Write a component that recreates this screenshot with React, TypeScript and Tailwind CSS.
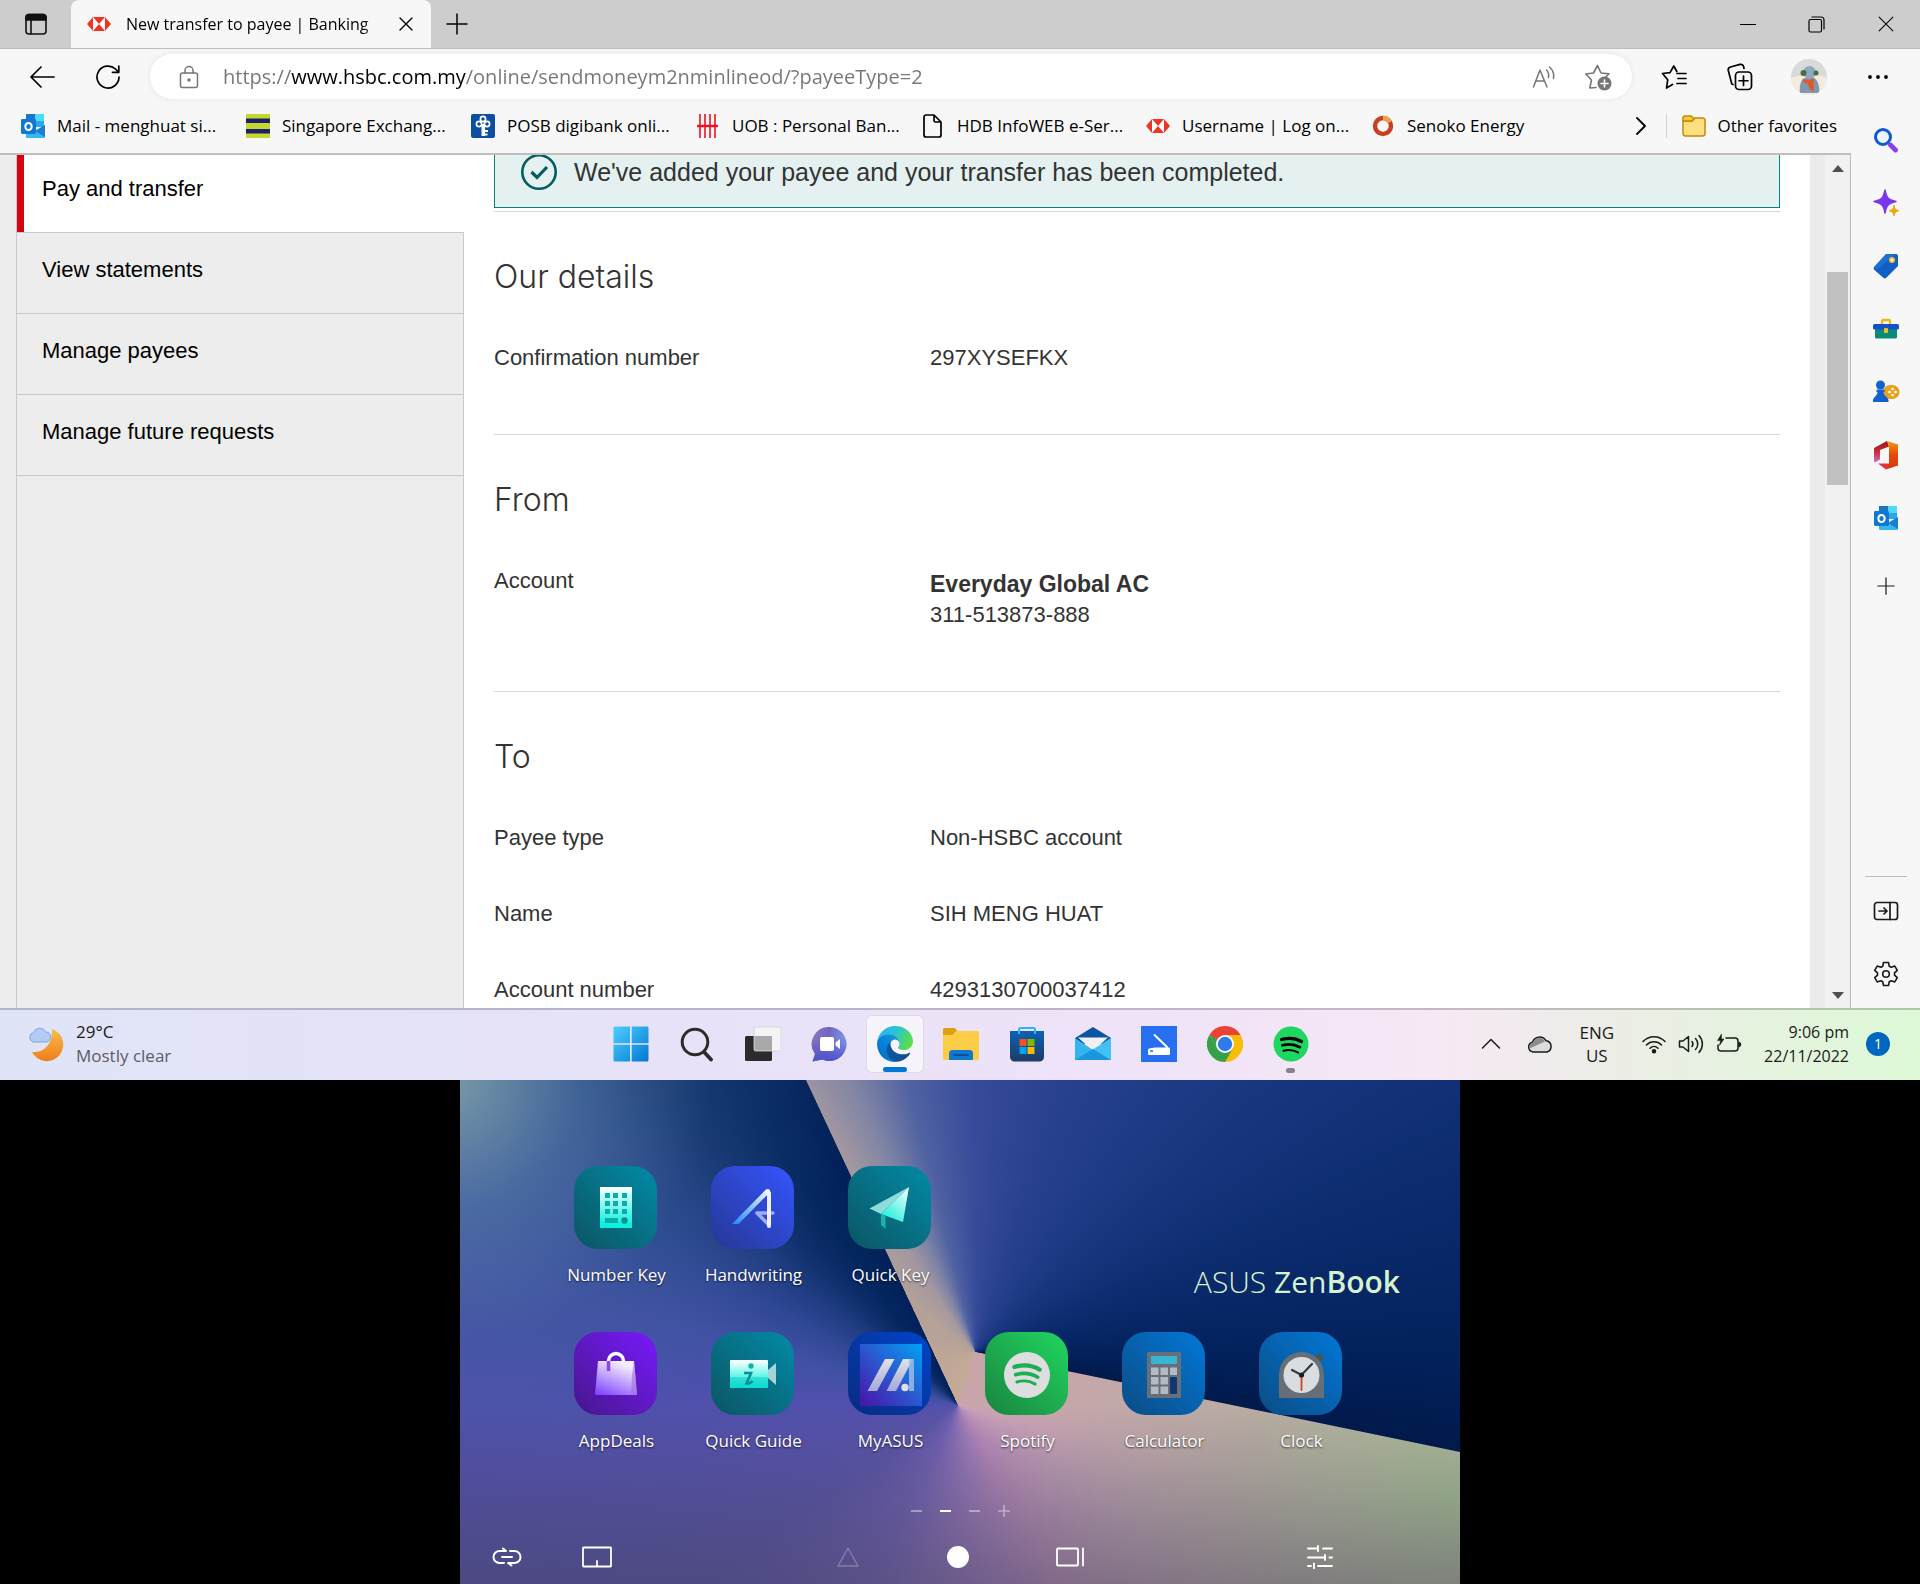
import type { ReactNode } from "react";

type IconProps = { className?: string };

/* ---------- Shared logos ---------- */

function HsbcLogo({ className = "w-6 h-4" }: IconProps) {
  return (
    <svg viewBox="0 0 24 16" className={className} aria-hidden="true">
      <rect x="5" y="1" width="14" height="14" fill="#fff" />
      <path d="M0 8 6 1v14zM24 8l-6-7v14z" fill="#ee3524" />
      <path d="M6 1h12l-6 7zM6 15h12l-6-7z" fill="#ee3524" />
    </svg>
  );
}

function OutlookLogo({ className = "w-6 h-6" }: IconProps) {
  return (
    <svg viewBox="0 0 24 24" className={className} aria-hidden="true">
      <path d="M5 0h17a1 1 0 0 1 1 1v12H5z" fill="#28a8ea" />
      <path d="M5 0h9v7H5z" fill="#1877c0" />
      <path d="M14 0h8a1 1 0 0 1 1 1v6h-9z" fill="#50d9ff" />
      <path d="M14 7h9v6h-9z" fill="#28a8ea" />
      <path d="M5 13l9 4 10-6v12a1 1 0 0 1-1 1H6a1 1 0 0 1-1-1z" fill="#35b8f1" />
      <path d="M14 17l10-6v12z" fill="#1a7fcf" />
      <rect x="0" y="5" width="15" height="15" rx="1.400" fill="#0f78d4" />
      <ellipse cx="7.500" cy="12.500" rx="3.200" ry="3.500" fill="none" stroke="#fff" strokeWidth="2" />
    </svg>
  );
}

function SpotifyWaves({ color }: { color: string }) {
  return (
    <g fill="none" stroke={color} strokeLinecap="round">
      <path d="M8.500 13.500c7-2 14-1.500 20 2" strokeWidth="3.200" />
      <path d="M9.500 19.300c6-1.700 12-1.200 17.500 1.900" strokeWidth="2.700" />
      <path d="M10.500 24.800c5-1.400 10-1 14.500 1.600" strokeWidth="2.200" />
    </g>
  );
}

/* ---------- Browser chrome icons ---------- */

const line = {
  fill: "none",
  stroke: "currentColor",
  strokeLinecap: "round" as const,
  strokeLinejoin: "round" as const,
};

function TabActions() {
  return (
    <svg viewBox="0 0 24 24" className="h-6 w-6" {...line} strokeWidth="1.600">
      <rect x="2" y="2.500" width="20" height="19.500" rx="3" />
      <path d="M2 8V5.500a3 3 0 0 1 3-3h14a3 3 0 0 1 3 3V8z" fill="#111" />
      <path d="M7 8v14" />
    </svg>
  );
}

function Cross({ className = "h-[14px] w-[14px]", weight = 1.4 }: IconProps & { weight?: number }) {
  return (
    <svg viewBox="0 0 14 14" className={className} {...line} strokeWidth={weight}>
      <path d="M1 1l12 12M13 1 1 13" />
    </svg>
  );
}

function Plus({ className = "h-[22px] w-[22px]" }: IconProps) {
  return (
    <svg viewBox="0 0 22 22" className={className} {...line} strokeWidth="1.500">
      <path d="M11 1v20M1 11h20" />
    </svg>
  );
}

function Back() {
  return (
    <svg viewBox="0 0 26 26" className="h-[26px] w-[26px]" {...line} strokeWidth="1.700">
      <path d="M25 13H2M12 3 2 13l10 10" />
    </svg>
  );
}

function Reload() {
  return (
    <svg viewBox="0 0 26 26" className="h-[26px] w-[26px]" {...line} strokeWidth="1.700">
      <path d="M24 13A11 11 0 1 1 20.500 5L23.500 8M23.800 2v6.300h-6.300" />
    </svg>
  );
}

function Lock() {
  return (
    <svg viewBox="0 0 20 24" className="h-6 w-5" {...line} strokeWidth="1.500">
      <rect x="1.500" y="8" width="17" height="14.500" rx="2" />
      <path d="M6 8V5.500a4 4 0 0 1 8 0V8" />
      <circle cx="10" cy="15" r="1" fill="currentColor" />
    </svg>
  );
}

function ReadAloud() {
  return (
    <svg viewBox="0 0 24 24" className="h-6 w-6" {...line} strokeWidth="1.500">
      <path d="M1.500 22 8 5l7 17M4 16h8" />
      <path d="M14.500 5c2 2 2.500 4.500 2 7.500M17.500 2c3.500 3 4.800 7 4 11.500" />
    </svg>
  );
}

function StarAdd() {
  return (
    <svg viewBox="0 0 28 28" className="h-7 w-7" {...line} strokeWidth="1.600">
      <path d="M12 24.500 5.800 25l1.700-8L1.800 11l7.700-1L13.500 2.500 17 10l8 .8-3 3" />
      <circle cx="20.500" cy="20.500" r="7" fill="currentColor" stroke="none" />
      <path d="M20.500 17v7M17 20.500h7" stroke="#fff" />
    </svg>
  );
}

function Favorites() {
  return (
    <svg viewBox="0 0 26 26" className="h-[26px] w-[26px]" {...line} strokeWidth="1.700">
      <path d="M11.500 20.500 5.500 24l1.200-8.200L1.500 9.500l7.500-.8L12.800 2l3 5.500M16 9.500h9M17 14.500h8M16 19.500h9" />
    </svg>
  );
}

function Collections() {
  return (
    <svg viewBox="0 0 26 28" className="h-7 w-[26px]" {...line} strokeWidth="1.700">
      <path d="M6 21.500 4.800 21 1.300 7.500A3 3 0 0 1 3.500 4L13 1.400a3 3 0 0 1 3.600 2.100L17 5.500" />
      <rect x="8.500" y="9" width="16" height="17.500" rx="3.500" />
      <path d="M16.500 13v9.500M12 17.750h9" />
    </svg>
  );
}

function Avatar() {
  return (
    <svg viewBox="0 0 36 36" className="h-9 w-9" aria-hidden="true">
      <clipPath id="avatar-clip">
        <circle cx="18" cy="18" r="18" />
      </clipPath>
      <g clipPath="url(#avatar-clip)">
        <rect width="36" height="36" fill="#d9dad9" />
        <path d="M0 19c8-4 28-4 36 0v17H0z" fill="#f3ebe0" />
        <path d="M9 34c-1-7 1-14 5-15h9c4 2 6 9 5 15z" fill="#7f98b0" />
        <circle cx="18.500" cy="13.500" r="6.500" fill="#8fa8bf" />
        <circle cx="12.500" cy="14" r="3" fill="#43703b" />
        <circle cx="25" cy="14" r="2.500" fill="#43703b" />
        <path d="M11.500 19.500c4 2 9 1.500 12-.5l-1 5 .5 8.500-4.500-2.500-1.500-5-4-1.500z" fill="#e0592a" />
      </g>
    </svg>
  );
}

/* ---------- Favorites bar ---------- */

const SgxIcon = () => (
  <svg viewBox="0 0 24 24" className="h-6 w-6">
    <rect width="24" height="24" fill="#c4d82e" />
    <path d="M0 4.500h24v4.500H0zM0 15h24v4.500H0z" fill="#1c1f6b" />
  </svg>
);

const PosbIcon = () => (
  <svg viewBox="0 0 24 24" className="h-6 w-6">
    <rect width="24" height="24" rx="2" fill="#0b4ea2" />
    <g fill="none" stroke="#fff" strokeWidth="1.700">
      <circle cx="12" cy="5" r="2.600" />
      <circle cx="8" cy="10" r="2.600" />
      <circle cx="16" cy="10" r="2.600" />
    </g>
    <path d="M10.500 10h3.500v12h-3.500zM14 16h3v2h-3zM14 19.500h2.500v2H14z" fill="#fff" />
  </svg>
);

const UobIcon = () => (
  <svg viewBox="0 0 24 24" className="h-6 w-6" stroke="#f01020" strokeWidth="1.600">
    <path d="M4 0v24M9 0v24M14 0v24M19 0v24" />
    <path d="M1 12h21" strokeWidth="2.400" />
  </svg>
);

const PageIcon = () => (
  <svg viewBox="0 0 24 24" className="h-6 w-6" {...line} strokeWidth="1.700">
    <path d="M5 1h8l7 7v13a2 2 0 0 1-2 2H5a2 2 0 0 1-2-2V3a2 2 0 0 1 2-2zM13 1v5.500A1.500 1.500 0 0 0 14.500 8H20" />
  </svg>
);

const SenokoIcon = () => (
  <svg viewBox="0 0 24 24" className="h-6 w-6">
    <circle cx="12" cy="12" r="8" fill="none" stroke="#c7401f" strokeWidth="4.400" />
    <path d="M12 4a8 8 0 0 1 7 4" fill="none" stroke="#efa04d" strokeWidth="4.400" />
  </svg>
);

const FolderIcon = () => (
  <svg viewBox="0 0 24 24" className="h-6 w-6" stroke="#c08c0a" strokeWidth="1.500">
    <path d="M1 7h9l3-3h7.500A2.500 2.500 0 0 1 23 6.500v13a2.500 2.500 0 0 1-2.500 2.500h-17A2.500 2.500 0 0 1 1 19.500z" fill="#ffdf80" />
    <path d="M1 7V4a2 2 0 0 1 2-2h5.500a2 2 0 0 1 1.400.6L12 5 10 7z" fill="#f5c93c" />
  </svg>
);

const favorites: { label: string; icon: ReactNode }[] = [
  { label: "Mail - menghuat si...", icon: <OutlookLogo /> },
  { label: "Singapore Exchang...", icon: <SgxIcon /> },
  { label: "POSB digibank onli...", icon: <PosbIcon /> },
  { label: "UOB : Personal Ban...", icon: <UobIcon /> },
  { label: "HDB InfoWEB e-Ser...", icon: <PageIcon /> },
  { label: "Username | Log on...", icon: <HsbcLogo /> },
  { label: "Senoko Energy", icon: <SenokoIcon /> },
];

/* ---------- Edge sidebar ---------- */

const sidebarTools: { label: string; icon: ReactNode }[] = [
  {
    label: "Search",
    icon: (
      <svg viewBox="0 0 26 26" className="h-[26px] w-[26px]">
        <path d="M17.500 18l5 5" stroke="#8a3fe8" strokeWidth="4.800" strokeLinecap="round" />
        <circle cx="10" cy="10" r="7.500" fill="#eef4fb" stroke="#1059d0" strokeWidth="3" />
      </svg>
    ),
  },
  {
    label: "Discover",
    icon: (
      <svg viewBox="0 0 28 28" className="h-7 w-7">
        <path d="M13 1c1.500 8 3 9.500 11 11.500-8 2-9.500 3.500-11 11.500-1.500-8-3-9.500-11-11.500C10 10.500 11.500 9 13 1z" fill="#7a35f0" stroke="#7a35f0" strokeWidth="1.500" strokeLinejoin="round" />
        <path d="M22 16c.8 4 1.700 5 5 5.700-3.300.8-4.200 1.800-5 5.300-.8-3.500-1.700-4.500-5-5.300 3.300-.7 4.200-1.700 5-5.700z" fill="#eda90c" stroke="#eda90c" />
      </svg>
    ),
  },
  {
    label: "Shopping",
    icon: (
      <svg viewBox="0 0 26 26" className="h-[26px] w-[26px]">
        <path d="M13 1h10a2 2 0 0 1 2 2v10L13.500 24.500a2.500 2.500 0 0 1-3.500 0L1.500 17a2.500 2.500 0 0 1 0-3.500z" fill="#0f5fc4" />
        <path d="M13 1h10L3 17l-1.500-3.500z" fill="#2a82e0" opacity=".5" />
        <circle cx="19" cy="7" r="2.300" fill="#fff" stroke="#f2b51d" strokeWidth="1.600" />
      </svg>
    ),
  },
  {
    label: "Tools",
    icon: (
      <svg viewBox="0 0 26 26" className="h-[26px] w-[26px]">
        <path d="M9 8V5.500A1.500 1.500 0 0 1 10.500 4h5A1.500 1.500 0 0 1 17 5.500V8" fill="none" stroke="#f2b51d" strokeWidth="2.400" />
        <path d="M2 12h22v9a1.500 1.500 0 0 1-1.500 1.500h-19A1.500 1.500 0 0 1 2 21z" fill="#0b8a78" />
        <rect x="0" y="8" width="26" height="5.500" rx="1.500" fill="#1650c8" />
        <rect x="11" y="12" width="4" height="5" rx="1" fill="#f6bf26" />
      </svg>
    ),
  },
  {
    label: "Games",
    icon: (
      <svg viewBox="0 0 28 24" className="h-6 w-7">
        <rect x="11" y="5" width="16.500" height="14" rx="7" fill="#e9a21b" />
        <g fill="#fff">
          <circle cx="20.500" cy="9" r="1.300" />
          <circle cx="23.500" cy="12" r="1.300" />
          <circle cx="20.500" cy="15" r="1.300" />
          <circle cx="17.500" cy="12" r="1.300" />
        </g>
        <circle cx="8.500" cy="5" r="4.500" fill="#1560cf" />
        <path d="M4.500 9.500h8v2.500h-1c0 4 5 5 5 8.500V22H1v-1.500C1 17 5.500 16 5.500 12h-1z" fill="#1560cf" />
      </svg>
    ),
  },
  {
    label: "Office",
    icon: (
      <svg viewBox="0 0 26 30" className="h-[30px] w-[26px]">
        <defs>
          <linearGradient id="office-l" x1="0" y1="0" x2="0" y2="1">
            <stop offset="0" stopColor="#9c1414" />
            <stop offset=".5" stopColor="#c92a3c" />
            <stop offset="1" stopColor="#d86fc0" />
          </linearGradient>
          <linearGradient id="office-r" x1="0" y1="0" x2="0" y2="1">
            <stop offset="0" stopColor="#f39a12" />
            <stop offset=".5" stopColor="#e2480c" />
            <stop offset="1" stopColor="#d33a08" />
          </linearGradient>
        </defs>
        <path d="M1 8 14 1l2 5.500L7 10v9.500l-5 3-1-1z" fill="url(#office-l)" />
        <path d="M5 23.500h11V27l-3 2.500z" fill="#e3304a" />
        <path d="M14 1l11 3.500v21l-12 4 3-5V6.500z" fill="url(#office-r)" />
      </svg>
    ),
  },
  { label: "Outlook", icon: <OutlookLogo /> },
];

function PanelIcon() {
  return (
    <svg viewBox="0 0 26 20" className="h-5 w-[26px]" {...line} strokeWidth="1.700">
      <rect x="1.500" y="1.500" width="23" height="17" rx="2.500" />
      <path d="M17 1.500v17M6 10h8M11 7l3 3-3 3" />
    </svg>
  );
}

function Gear() {
  return (
    <svg viewBox="0 0 26 26" className="h-[26px] w-[26px]" {...line} strokeWidth="1.600">
      <path d="M10.500 1.500h5l.7 3.700 2 1.100 3.600-1.200 2.500 4.300-2.800 2.500v2.200l2.800 2.500-2.500 4.300-3.600-1.200-2 1.100-.7 3.700h-5l-.7-3.700-2-1.100-3.600 1.200-2.500-4.300 2.800-2.500v-2.200L1.700 9.400l2.500-4.300 3.600 1.200 2-1.100z" />
      <circle cx="13" cy="13" r="3.300" />
    </svg>
  );
}

/* ---------- Taskbar ---------- */

const taskbarApps: { label: string; icon: ReactNode; state?: "active" | "running" }[] = [
  {
    label: "Start",
    icon: (
      <svg viewBox="0 0 36 36" className="h-9 w-9">
        <defs>
          <linearGradient id="win" x1="0" y1="0" x2="1" y2="1" gradientUnits="objectBoundingBox">
            <stop offset="0" stopColor="#4cd0fd" />
            <stop offset="1" stopColor="#0277d4" />
          </linearGradient>
        </defs>
        <path d="M2 .5h15v16.700H.5V2A1.500 1.500 0 0 1 2 .5zM18.700.5H34A1.500 1.500 0 0 1 35.500 2v15.200H18.700zM.5 18.800H17v16.700H2A1.500 1.500 0 0 1 .5 34zM18.700 18.800h16.800V34a1.500 1.500 0 0 1-1.500 1.500H18.700z" fill="url(#win)" />
      </svg>
    ),
  },
  {
    label: "Search",
    icon: (
      <svg viewBox="0 0 36 36" className="h-9 w-9" fill="none" stroke="#2b2b2b" strokeLinecap="round">
        <circle cx="16" cy="16" r="12.800" strokeWidth="3" />
        <path d="M25.500 26.500 32 33.500" strokeWidth="3.800" />
      </svg>
    ),
  },
  {
    label: "Task view",
    icon: (
      <svg viewBox="0 0 36 36" className="h-9 w-9">
        <rect x="0" y="10" width="27" height="25" rx="1.500" fill="#2b2b2b" />
        <rect x="9" y="1" width="27" height="24" rx="1.500" fill="#f4f4f4" stroke="#cfcfd4" strokeWidth=".8" />
        <path d="M9.400 10H27v14.600H9.400z" fill="#a9a9ab" />
      </svg>
    ),
  },
  {
    label: "Chat",
    icon: (
      <svg viewBox="0 0 36 36" className="h-9 w-9">
        <defs>
          <linearGradient id="chat" x1="0" y1="0" x2="1" y2=".2">
            <stop offset="0" stopColor="#8f7bb8" />
            <stop offset=".5" stopColor="#6f66c0" />
            <stop offset="1" stopColor="#7f98ea" />
          </linearGradient>
          <linearGradient id="chat-low" x1="0" y1="0" x2="0" y2="1">
            <stop offset=".3" stopColor="#5052c8" stopOpacity="0" />
            <stop offset="1" stopColor="#5052c8" />
          </linearGradient>
        </defs>
        <path d="M18.500 1a17 17 0 1 1-7 32.500L1.500 35.500 4 28A17 17 0 0 1 18.500 1z" fill="url(#chat)" />
        <path d="M18.500 1a17 17 0 1 1-7 32.500L1.500 35.500 4 28A17 17 0 0 1 18.500 1z" fill="url(#chat-low)" />
        <rect x="9" y="11" width="14" height="14" rx="2" fill="#fff" />
        <path d="M24.500 16.500 29 13v10l-4.500-3.500z" fill="#fff" />
      </svg>
    ),
  },
  {
    label: "Microsoft Edge",
    state: "active",
    icon: (
      <svg viewBox="0 0 256 256" className="h-9 w-9">
        <defs>
          <linearGradient id="edge-a" x1="0" y1="0" x2="1" y2="0">
            <stop offset="0" stopColor="#0c59a4" />
            <stop offset="1" stopColor="#114a8b" />
          </linearGradient>
          <linearGradient id="edge-b" x1="1" y1="0" x2=".2" y2="1">
            <stop offset="0" stopColor="#1b9de2" />
            <stop offset=".6" stopColor="#0680d7" />
            <stop offset="1" stopColor="#0a6cc4" />
          </linearGradient>
          <linearGradient id="edge-c" x1="0" y1=".2" x2="1" y2=".5">
            <stop offset="0" stopColor="#2fb0ee" />
            <stop offset=".5" stopColor="#2bc3d2" />
            <stop offset="1" stopColor="#5ce044" />
          </linearGradient>
        </defs>
        <path fill="url(#edge-a)" d="M231 190.500c-3.400 1.800-6.900 3.400-10.500 4.700a101.800 101.800 0 0 1-35.900 6.400c-47.300 0-88.500-32.500-88.500-74.300 0-11.400 6.400-21.900 16.400-27.300-42.800 1.800-53.800 46.400-53.800 72.500 0 74 68.100 81.400 82.800 81.400 7.900 0 19.800-2.300 27-4.600l1.300-.4a128.300 128.300 0 0 0 66.600-52.800 4 4 0 0 0-5.400-5.600z" />
        <path fill="url(#edge-b)" d="M105.700 241.400a79.200 79.200 0 0 1-22.700-21.300 80.700 80.700 0 0 1 29.500-120c3.200-1.500 8.500-4.100 15.600-4a32.400 32.400 0 0 1 25.700 13 31.900 31.900 0 0 1 6.300 18.700c0-.2 24.500-79.600-80-79.600-43.900 0-80 41.600-80 78.200a130.200 130.200 0 0 0 12.100 56 128 128 0 0 0 156.400 67 75.600 75.600 0 0 1-62.800-8z" />
        <path fill="url(#edge-c)" d="M152.300 148.900c-.8 1-3.300 2.500-3.300 5.700 0 2.600 1.700 5.200 4.800 7.300 14.300 10 41.400 8.600 41.500 8.600a59.600 59.600 0 0 0 30.300-8.400A61.400 61.400 0 0 0 256 109.200c.3-22.400-8-37.300-11.300-44C223.500 23.900 177.700 0 128 0A128 128 0 0 0 0 126.200c.5-36.500 36.800-66 80-66 3.500 0 23.500.3 42 10a72.600 72.600 0 0 1 30.900 29.300c6.100 10.600 7.200 24.100 7.200 29.500s-2.700 13.300-7.800 19.900z" />
      </svg>
    ),
  },
  {
    label: "File Explorer",
    icon: (
      <svg viewBox="0 0 36 36" className="h-9 w-9">
        <path d="M0 3.500A1.500 1.500 0 0 1 1.500 2H12l3 4v4H0z" fill="#dfa011" />
        <path d="M13 5h21.500A1.500 1.500 0 0 1 36 6.500v26a1.500 1.500 0 0 1-1.500 1.500h-33A1.500 1.500 0 0 1 0 32.500V9h9.500z" fill="#fbcd46" />
        <path d="M6 34v-6.500A3.500 3.500 0 0 1 9.500 24h17a3.500 3.500 0 0 1 3.500 3.500V34z" fill="#1079cd" />
        <path d="M11 29h14" stroke="#0a4f95" strokeWidth="2" strokeLinecap="round" />
      </svg>
    ),
  },
  {
    label: "Microsoft Store",
    icon: (
      <svg viewBox="0 0 36 36" className="h-9 w-9">
        <defs>
          <linearGradient id="store" x1="0" y1="0" x2="0" y2="1">
            <stop offset="0" stopColor="#0a63b8" />
            <stop offset="1" stopColor="#1f3a63" />
          </linearGradient>
        </defs>
        <path d="M10 8V3.500A1.500 1.500 0 0 1 11.500 2h13A1.500 1.500 0 0 1 26 3.500V8" fill="none" stroke="#2fb4f0" strokeWidth="2" />
        <path d="M1 5h34v26a4.500 4.500 0 0 1-4.500 4.500h-25A4.500 4.500 0 0 1 1 31z" fill="url(#store)" />
        <path d="M9 8V4h2v4zM25 8V4h2v4z" fill="#2fb4f0" />
        <path d="M10.500 13h7v7h-7z" fill="#f25022" />
        <path d="M18.500 13h7v7h-7z" fill="#7fba00" />
        <path d="M10.500 21h7v7h-7z" fill="#00a4ef" />
        <path d="M18.500 21h7v7h-7z" fill="#ffb900" />
      </svg>
    ),
  },
  {
    label: "Mail",
    icon: (
      <svg viewBox="0 0 36 36" className="h-9 w-9">
        <path d="M0 12 18 1l18 11v6H0z" fill="#0b55a0" />
        <path d="M3 11.500h30L18 25z" fill="#f1f1f3" />
        <path d="M0 12l18 12 18-12v22H0z" fill="#33b6ee" />
        <path d="M0 34l18-11L36 34z" fill="#1a95df" />
        <path d="M36 12v22L18 23z" fill="#48c8f5" opacity=".7" />
      </svg>
    ),
  },
  {
    label: "Scan",
    icon: (
      <svg viewBox="0 0 36 36" className="h-9 w-9">
        <rect width="36" height="36" fill="#276ef1" />
        <path d="M13.500 9 26 21" stroke="#fff" strokeWidth="2" strokeLinecap="round" />
        <path d="M8 22.500 14 21.500h14a1 1 0 0 1 1 1V28a1 1 0 0 1-1 1H8a1 1 0 0 1-1-1v-4.500z" fill="#fff" />
        <path d="M9 25h3" stroke="#276ef1" strokeWidth="1.500" />
      </svg>
    ),
  },
  {
    label: "Google Chrome",
    icon: (
      <svg viewBox="0 0 36 36" className="h-9 w-9">
        <path d="M18 18 2.400 9A18 18 0 0 1 33.600 9z" fill="#ea4335" />
        <path d="M18 18V9h15.600A18 18 0 0 1 18 36z" fill="#fbbc05" />
        <path d="M25.800 22.500 18 36A18 18 0 0 1 2.400 9l7.800 13.500z" fill="#34a048" />
        <path d="M2.400 9H18v9z" fill="#ea4335" />
        <path d="M2.400 9l7.800 13.500L18 18z" fill="#34a048" />
        <circle cx="18" cy="18" r="9" fill="#fff" />
        <circle cx="18" cy="18" r="7.200" fill="#2f7bee" />
      </svg>
    ),
  },
  {
    label: "Spotify",
    state: "running",
    icon: (
      <svg viewBox="0 0 36 36" className="h-9 w-9">
        <circle cx="18" cy="18" r="17.500" fill="#1ed760" />
        <SpotifyWaves color="#000" />
      </svg>
    ),
  },
];

function Taskbar() {
  return (
    <footer className="grid h-[72px] shrink-0 grid-cols-[1fr_auto_1fr] items-center border-t-2 border-black/20 bg-[linear-gradient(to_right,#e0e4f7,#e6e2f8_30%,#efe3f8_60%,#f6e8f4_75%,#ebeee5_85%,#ddf9d6_100%)] pb-[2px] text-[17px] text-[#1b1b1b]">
      <button className="flex items-center gap-3 justify-self-start pl-7 text-left leading-6">
        <svg viewBox="0 0 36 36" className="h-9 w-9" aria-hidden="true">
          <defs>
            <linearGradient id="moon" x1="0" y1="0" x2="0" y2="1">
              <stop offset="0" stopColor="#f5c04a" />
              <stop offset="1" stopColor="#f07c1c" />
            </linearGradient>
          </defs>
          <path d="M24 3a16.500 16.500 0 1 1-20 23c12 1 21-8 20-23z" fill="url(#moon)" />
          <path d="M5 16a5 5 0 0 1 .5-9.500 6.500 6.500 0 0 1 12-.5A5 5 0 0 1 18 16z" fill="#b4ccf5" stroke="#7ba3ea" />
        </svg>
        <span>
          29°C
          <span className="block text-[#5c5b66]">Mostly clear</span>
        </span>
      </button>
      <nav aria-label="Taskbar" className="flex gap-2 pl-px">
        {taskbarApps.map((app) => (
          <button
            key={app.label}
            aria-label={app.label}
            className={
              app.state === "active"
                ? "relative flex h-[58px] w-[58px] items-center justify-center rounded-md border border-black/10 bg-white/60"
                : "relative flex h-[58px] w-[58px] items-center justify-center"
            }
          >
            {app.icon}
            {app.state === "active" && <span className="absolute bottom-0 h-[5px] w-6 rounded-full bg-[#0078d4]" />}
            {app.state === "running" && <span className="absolute bottom-0 h-[5px] w-[9px] rounded-full bg-[#85808a]" />}
          </button>
        ))}
      </nav>
      <div className="flex items-center justify-self-end pr-[30px] leading-6">
        <button aria-label="Show hidden icons" className="mr-[26px]">
          <svg viewBox="0 0 20 20" className="h-5 w-5" {...line} strokeWidth="1.500">
            <path d="M1.500 14 10 5.500l8.500 8.500" />
          </svg>
        </button>
        <button aria-label="OneDrive" className="mr-[26px]">
          <svg viewBox="0 0 26 20" className="h-5 w-[26px]" {...line} strokeWidth="1.500">
            <path d="M6 18a5 5 0 0 1-.5-9.800 7.500 7.500 0 0 1 13.500-1.500 5.800 5.800 0 0 1 1 11.300z" fill="#dcdcdc" />
            <path d="M2.500 14.500 18 7.500C16 3 9 1.500 6 8.500c-3 .5-4 3.500-3.500 6z" fill="#8c8c8c" stroke="none" />
          </svg>
        </button>
        <button className="mr-7 text-center leading-[23px]">
          ENG
          <br />
          US
        </button>
        <button aria-label="Network, volume and battery" className="mr-[22px] flex gap-3">
          <svg viewBox="0 0 24 20" className="h-5 w-6" {...line} strokeWidth="1.500">
            <path d="M1 7.500c6-6.500 16-6.500 22 0M4.500 11c4-4.300 11-4.300 15 0M8 14.300c2.300-2.300 5.700-2.300 8 0" />
            <circle cx="12" cy="17.300" r="1.500" fill="currentColor" />
          </svg>
          <svg viewBox="0 0 26 20" className="h-5 w-[26px]" {...line} strokeWidth="1.500">
            <path d="M1.500 7v6H5l5.500 4.500v-15L5 7z" />
            <path d="M14 7.500c1.200 1.500 1.200 3.500 0 5M17.500 4.500c3 3 3 8 0 11M21 1.500c4.500 5 4.500 12 0 17" />
          </svg>
          <svg viewBox="0 0 26 20" className="h-5 w-[26px]" {...line} strokeWidth="1.500">
            <path d="M10 4h9a3 3 0 0 1 3 3v7a3 3 0 0 1-3 3H5a3 3 0 0 1-3-3v-3" />
            <path d="M23 8.500c2 .5 2 3.500 0 4z" fill="currentColor" />
            <path d="M5.500 0 1.500 6.500h3L3.500 11.500l4.500-6.500H5.500z" fill="currentColor" strokeWidth=".5" />
          </svg>
        </button>
        <button className="mr-[17px] text-right text-base leading-6">
          9:06 pm
          <br />
          22/11/2022
        </button>
        <button
          aria-label="1 new notification"
          className="flex h-6 w-6 items-center justify-center rounded-full bg-[#0067c0] text-sm text-white"
        >
          1
        </button>
      </div>
    </footer>
  );
}

/* ---------- Browser ---------- */

const navItems = ["View statements", "Manage payees", "Manage future requests"];

const windowButton = "flex w-[69px] items-center justify-center";

function TabStrip() {
  return (
    <div className="flex h-12 shrink-0 bg-[#cdcdcd] text-base">
      <button aria-label="Tab actions" className="flex w-[71px] items-center justify-center text-[#111]">
        <TabActions />
      </button>
      <div className="flex w-[360px] items-center rounded-t-lg bg-[#f7f7f7] pr-[18px] pl-4">
        <HsbcLogo />
        <span className="ml-[15px] min-w-0 flex-1 mask-[linear-gradient(to_right,#000_236px,rgba(0,0,0,0.4)_252px)] whitespace-nowrap">
          New transfer to payee | Banking
        </span>
        <button aria-label="Close tab">
          <Cross />
        </button>
      </div>
      <button aria-label="New tab" className="flex w-[52px] items-center justify-center">
        <Plus />
      </button>
      <div className="ml-auto flex">
        <button aria-label="Minimize" className={windowButton}>
          <span className="h-px w-4 bg-black" />
        </button>
        <button aria-label="Restore" className={windowButton}>
          <svg viewBox="0 0 17 17" className="h-[17px] w-[17px]" {...line} strokeWidth="1.200">
            <rect x="1" y="3.500" width="12.500" height="12.500" rx="1.500" />
            <path d="M4 1h9a3 3 0 0 1 3 3v9" />
          </svg>
        </button>
        <button aria-label="Close" className={windowButton}>
          <Cross className="h-4 w-4" weight={0.9} />
        </button>
      </div>
    </div>
  );
}

function Toolbar() {
  return (
    <div className="flex h-14 shrink-0 items-center border-t border-[#bdbdbd] text-black">
      <button aria-label="Back" className="ml-[29px]">
        <Back />
      </button>
      <button aria-label="Refresh" className="ml-10">
        <Reload />
      </button>
      <div className="ml-[29px] flex h-[45px] flex-1 items-center rounded-full bg-white pr-5 pl-[29px] text-[#767676] shadow-[0_0_6px_rgba(0,0,0,0.08)]">
        <Lock />
        <input
          type="text"
          aria-label="Address"
          defaultValue="https://www.hsbc.com.my/online/sendmoneym2nminlineod/?payeeType=2"
          className="ml-6 min-w-0 flex-1 bg-[linear-gradient(to_right,#767676_68px,#000_68px,#000_243px,#767676_243px)] bg-clip-text text-xl text-transparent outline-none"
        />
        <button aria-label="Read aloud">
          <ReadAloud />
        </button>
        <button aria-label="Add to favorites" className="ml-7">
          <StarAdd />
        </button>
      </div>
      <button aria-label="Favorites" className="ml-[29px]">
        <Favorites />
      </button>
      <button aria-label="Collections" className="ml-10">
        <Collections />
      </button>
      <button aria-label="Profile" className="ml-[38px]">
        <Avatar />
      </button>
      <button aria-label="Settings and more" className="mr-8 ml-[41px]">
        <svg viewBox="0 0 20 4" className="h-1 w-5">
          <circle cx="2" cy="2" r="1.900" />
          <circle cx="10" cy="2" r="1.900" />
          <circle cx="18" cy="2" r="1.900" />
        </svg>
      </button>
    </div>
  );
}

function FavoritesBar() {
  return (
    <nav aria-label="Favorites bar" className="flex h-[49px] shrink-0 items-center pr-[14px] pb-[6px] pl-[21px] text-[17px] text-black">
      {favorites.map((f) => (
        <a key={f.label} href="#" className="flex w-[225px] shrink-0 items-center gap-3 whitespace-nowrap">
          {f.icon}
          {f.label}
        </a>
      ))}
      <button aria-label="More favorites" className="ml-auto">
        <svg viewBox="0 0 10 18" className="h-[18px] w-[10px]" {...line} strokeWidth="1.800">
          <path d="M1 1l8 8-8 8" />
        </svg>
      </button>
      <span className="ml-5 h-6 w-px bg-[#d0d0d0]" />
      <button className="ml-[15px] flex items-center gap-3 whitespace-nowrap">
        <FolderIcon />
        Other favorites
      </button>
    </nav>
  );
}

function Detail({ label, children }: { label: string; children: ReactNode }) {
  return (
    <div className="grid grid-cols-[436px_1fr]">
      <dt>{label}</dt>
      <dd>{children}</dd>
    </div>
  );
}

function Section({ title, children }: { title: string; children: ReactNode }) {
  return (
    <section className="border-t border-[#d7d8d6] pt-[45px] pb-[62px]">
      <h2 className="mb-[47px] font-[Inter] text-[32px] leading-10 font-light">{title}</h2>
      <dl className="flex flex-col gap-12">{children}</dl>
    </section>
  );
}

function BankPage() {
  return (
    <div className="flex min-h-0 flex-1 overflow-hidden border-t-2 border-r border-[#bfbfbf] bg-white font-['Liberation_Sans',sans-serif] text-[22px] leading-7">
      <aside className="flex w-[464px] shrink-0 bg-[#ededed] pl-4">
        <nav aria-label="Account services" className="flex flex-1 flex-col border-l border-[#c9c9c9] text-black">
          <a href="#" className="border-l-[7px] border-[#db0011] bg-white pt-5 pb-[29px] pl-[18px]">
            Pay and transfer
          </a>
          <div className="flex-1 border-t border-r border-[#c9c9c9]">
            {navItems.map((item) => (
              <a key={item} href="#" className="block border-b border-[#c9c9c9] pt-[23px] pb-[29px] pl-[25px]">
                {item}
              </a>
            ))}
          </div>
        </nav>
      </aside>
      <main className="min-w-0 flex-1 px-[30px] text-[#333]">
        <div role="status" className="mb-[3px] h-[53px] border border-t-0 border-[#00847f] bg-[#e4f1f0]">
          <div className="flex h-[34px] items-center pl-[26px] text-[25px]">
            <svg viewBox="0 0 36 36" className="mr-[17px] h-9 w-9 shrink-0" fill="none" stroke="#005e5d">
              <circle cx="18" cy="18" r="16.700" strokeWidth="2.600" />
              <path d="M10.500 18l5.500 5.500L26 13" strokeWidth="3.200" />
            </svg>
            We've added your payee and your transfer has been completed.
          </div>
        </div>
        <Section title="Our details">
          <Detail label="Confirmation number">297XYSEFKX</Detail>
        </Section>
        <Section title="From">
          <Detail label="Account">
            <strong className="block text-[23px] leading-[34px]">Everyday Global AC</strong>
            311-513873-888
          </Detail>
        </Section>
        <Section title="To">
          <Detail label="Payee type">Non-HSBC account</Detail>
          <Detail label="Name">SIH MENG HUAT</Detail>
          <Detail label="Account number">4293130700037412</Detail>
        </Section>
      </main>
      <div className="w-[15px] shrink-0 bg-[#ebebeb]" />
      <div className="flex w-[25px] shrink-0 flex-col items-center bg-[#f1f1f1] text-[#505050]">
        <button aria-label="Scroll up" className="flex h-[27px] items-center">
          <svg viewBox="0 0 12 7" className="h-[7px] w-3">
            <path d="M0 7l6-7 6 7z" fill="currentColor" />
          </svg>
        </button>
        <div className="w-[21px] flex-1 pt-[90px]">
          <div className="h-[213px] bg-[#c1c1c1]" />
        </div>
        <button aria-label="Scroll down" className="flex h-[25px] items-center">
          <svg viewBox="0 0 12 7" className="h-[7px] w-3">
            <path d="M0 0l6 7 6-7z" fill="currentColor" />
          </svg>
        </button>
      </div>
    </div>
  );
}

function EdgeSidebar() {
  const cell = "flex h-[63px] w-full items-center justify-center";
  return (
    <aside className="flex w-[69px] shrink-0 flex-col items-center pt-1 pb-[3px] text-[#1a1a1a]">
      {sidebarTools.map((t) => (
        <button key={t.label} aria-label={t.label} className={cell}>
          {t.icon}
        </button>
      ))}
      <button aria-label="Customize" className="flex h-[74px] w-full items-center justify-center">
        <Plus className="h-[18px] w-[18px]" />
      </button>
      <span className="mt-auto mb-[2px] h-px w-[42px] bg-[#bdbdbd]" />
      <button aria-label="Hide sidebar" className={cell}>
        <PanelIcon />
      </button>
      <button aria-label="Sidebar settings" className={cell}>
        <Gear />
      </button>
    </aside>
  );
}

/* ---------- ScreenPad ---------- */

const tileColors = {
  teal: "bg-linear-to-tr from-[#0a5563] to-[#008ba8]",
  blue: "bg-linear-to-tr from-[#263795] to-[#3355ff]",
  purple: "bg-linear-to-tr from-[#45168c] to-[#7a18ff]",
  navy: "bg-linear-to-tr from-[#072c80] to-[#0044cc]",
  green: "bg-linear-to-tr from-[#1a8440] to-[#1fd860]",
  azure: "bg-linear-to-tr from-[#0a4c85] to-[#0078d8]",
};

const padApps: { label: string; tile: string; icon: ReactNode }[] = [
  {
    label: "Number Key",
    tile: tileColors.teal,
    icon: (
      <svg viewBox="0 0 83 83" className="h-full w-full">
        <defs>
          <linearGradient id="mint" x1="0" y1="0" x2="0" y2="1">
            <stop offset="0" stopColor="#fff" />
            <stop offset=".9" stopColor="#0ff0e0" />
          </linearGradient>
        </defs>
        <rect x="26" y="21" width="32" height="41" fill="url(#mint)" />
        <path
          d="M31 27h5v5h-5zM39 27h5v5h-5zM48 27h5v5h-5zM31 35h5v5h-5zM39 35h5v5h-5zM48 35h5v5h-5zM31 43h5v5h-5zM39 43h5v5h-5zM48 43h5v5h-5zM31 52h13v5H31z"
          fill="#0bada8"
        />
        <circle cx="50.500" cy="54.500" r="3.200" fill="#0b8f90" />
      </svg>
    ),
  },
  {
    label: "Handwriting",
    tile: tileColors.blue,
    icon: (
      <svg viewBox="0 0 83 83" className="h-full w-full" fill="none" strokeWidth="4" strokeLinecap="round">
        <defs>
          <linearGradient id="pen" x1="0" y1="1" x2="1" y2="0">
            <stop offset="0" stopColor="#1f86ff" />
            <stop offset="1" stopColor="#fff" />
          </linearGradient>
        </defs>
        <path d="M58 59 46 47h16" stroke="#9aaef5" strokeWidth="3.500" strokeLinejoin="round" />
        <path d="M58 27v33" stroke="#eef0ff" />
        <path d="M21 58 55 23.500a2.500 2.500 0 0 1 4 2.500L27.500 58z" fill="url(#pen)" stroke="none" />
      </svg>
    ),
  },
  {
    label: "Quick Key",
    tile: tileColors.teal,
    icon: (
      <svg viewBox="0 0 83 83" className="h-full w-full">
        <defs>
          <linearGradient id="kite" x1="1" y1="0" x2=".3" y2="1">
            <stop offset="0" stopColor="#fff" />
            <stop offset="1" stopColor="#22f0dc" />
          </linearGradient>
        </defs>
        <path d="M21.500 42.500 61 21 33 48z" fill="#8edcda" />
        <path d="M61 21 55 56 33 48z" fill="url(#kite)" />
        <path d="M33 48l4.500 2V63L33 59z" fill="#18b5ac" />
      </svg>
    ),
  },
  {
    label: "AppDeals",
    tile: tileColors.purple,
    icon: (
      <svg viewBox="0 0 83 83" className="h-full w-full">
        <defs>
          <linearGradient id="bag" x1="0" y1="1" x2=".5" y2="0">
            <stop offset="0" stopColor="#7b3cff" />
            <stop offset="1" stopColor="#f5efff" />
          </linearGradient>
        </defs>
        <path d="M24 29h36l3 34H21z" fill="url(#bag)" />
        <path d="M60 29l3 34h-6l1-20z" fill="#a06cd8" opacity=".6" />
        <path d="M34.500 30v-1a7.500 7.500 0 0 1 15 0v1" fill="none" stroke="#fff" strokeWidth="3.500" />
        <path d="M34.500 29v10" stroke="#8a45e8" strokeWidth="3.500" />
      </svg>
    ),
  },
  {
    label: "Quick Guide",
    tile: tileColors.teal,
    icon: (
      <svg viewBox="0 0 83 83" className="h-full w-full">
        <rect x="19" y="28" width="38" height="28" rx="1" fill="url(#mint)" />
        <path d="M19 45h38v11H19z" fill="#0fc9c2" opacity=".5" />
        <path d="M57 38l8-7v22l-8-7z" fill="#a5d3d8" />
        <circle cx="40" cy="34" r="2.700" fill="#0bb3b0" />
        <path d="M33 41h7l-4.500 10.500c2.500.5 4.500-.5 6-2.500" fill="none" stroke="#0b8f92" strokeWidth="2.600" />
      </svg>
    ),
  },
  {
    label: "MyASUS",
    tile: tileColors.navy,
    icon: (
      <svg viewBox="0 0 83 83" className="h-full w-full">
        <defs>
          <linearGradient id="myasus" x1="0" y1="1" x2="1" y2="0">
            <stop offset="0" stopColor="#4a10a8" />
            <stop offset=".5" stopColor="#2a58d0" />
            <stop offset="1" stopColor="#00a2f5" />
          </linearGradient>
          <linearGradient id="silver" x1="0" y1="0" x2="0" y2="1">
            <stop offset="0" stopColor="#e2e2e6" />
            <stop offset="1" stopColor="#a5a8d8" />
          </linearGradient>
        </defs>
        <rect x="12" y="12" width="62" height="62" fill="url(#myasus)" />
        <path d="M37 27h9.500L29 59h-9.500zM55 27h10L48 59h-9.500z" fill="url(#silver)" />
        <path d="M61 27h5v32h-5z" fill="#9dbbe6" opacity=".85" />
        <circle cx="57" cy="55.500" r="3.700" fill="#e3e0dc" />
      </svg>
    ),
  },
  {
    label: "Spotify",
    tile: tileColors.green,
    icon: (
      <svg viewBox="0 0 83 83" className="h-full w-full">
        <circle cx="42" cy="43" r="23" fill="#dedede" />
        <g transform="translate(18.500 17) scale(1.270 1.330)">
          <SpotifyWaves color="#1eae52" />
        </g>
      </svg>
    ),
  },
  {
    label: "Calculator",
    tile: tileColors.azure,
    icon: (
      <svg viewBox="0 0 83 83" className="h-full w-full">
        <rect x="25" y="20" width="34" height="46" rx="1" fill="#66707a" />
        <rect x="29" y="24" width="26" height="8" rx="1" fill="#3bb4d4" />
        <path
          d="M29 35.500h7.500V43H29zM38.500 35.500H46V43h-7.500zM48 35.500h7V43h-7zM29 45h7.500v7.500H29zM38.500 45H46v7.500h-7.500zM29 54.500h7.500V62H29zM38.500 54.500H46V62h-7.500z"
          fill="#b4b9c2"
        />
        <rect x="48" y="45" width="7" height="17" rx="1" fill="#12366e" />
      </svg>
    ),
  },
  {
    label: "Clock",
    tile: tileColors.azure,
    icon: (
      <svg viewBox="0 0 83 83" className="h-full w-full" strokeLinecap="round">
        <path d="M58 23l5 5" stroke="#4d5257" strokeWidth="6" strokeLinecap="butt" />
        <path d="M20 66V42.500a22.500 22.500 0 0 1 45 0V66z" fill="#666f78" />
        <circle cx="42.500" cy="43" r="18" fill="#dadddf" />
        <path d="M33 38l9.500 5L53 32" fill="none" stroke="#33383d" strokeWidth="2.200" />
        <path d="M42.500 44v14" stroke="#d0431a" strokeWidth="1.800" />
        <circle cx="42.500" cy="43" r="2.600" fill="#1c1f22" />
      </svg>
    ),
  },
];

function Wallpaper() {
  return (
    <div aria-hidden="true" className="absolute inset-0">
      <div className="absolute inset-0 bg-[conic-gradient(from_0deg_at_498px_325px,#c9a5a8_0deg,#c9a5ac_90deg,#cba3b6_104deg,#c098ba_125deg,#b487b8_150deg,#9476b8_175deg,#7060b2_205deg,#5a54a8_235deg,#5451ac_262deg,#4c50ac_274deg,#4150a4_286deg,#2f4794_298deg,#1e3b80_308deg,#0f2e6b_316deg,#04265f_325deg,#02205a_335deg,#c9a5a8_335deg)]" />
      <div className="absolute inset-0 bg-[radial-gradient(ellipse_400px_400px_at_-10px_0px,rgba(125,158,168,0.95),rgba(88,126,168,0.6)_32%,rgba(60,100,150,0.25)_65%,transparent)]" />
      <div className="absolute inset-0 bg-[radial-gradient(ellipse_460px_330px_at_1000px_420px,rgba(160,195,145,0.85),rgba(165,180,150,0.5)_50%,transparent)]" />
      <div className="absolute inset-0 bg-[linear-gradient(to_bottom,transparent_65%,rgba(60,60,75,0.42))]" />
      <div className="absolute inset-0 bg-[conic-gradient(from_0deg_at_515px_272px,#364b9a_0deg,#2a4290_15deg,#1f3b86_35deg,#14337a_55deg,#09296a_75deg,#02205a_92deg,#01194a_102deg,#d0ab9c_103deg,#c8ab98_180deg,#bda596_270deg,#b3a098_310deg,#a498a0_326deg,#7f84a5_336deg,#5062a2_346deg,#364b9a_360deg)] [clip-path:polygon(346px_0,100%_0,100%_372px,515px_272px,498px_325px)]" />
    </div>
  );
}

function ScreenPad() {
  const dash = "h-[2px] w-[11px] bg-white";
  return (
    <section aria-label="ScreenPad" className="shrink-0 bg-black text-white">
      <div className="relative mx-auto h-[504px] w-[1000px] max-w-full overflow-hidden">
        <Wallpaper />
        <p className="absolute top-[182px] right-[60px] font-['Open_Sans',sans-serif] text-[30px] leading-10 font-light text-[#d6f2cf]">
          ASUS <span className="font-normal">Zen</span>
          <span className="font-semibold">Book</span>
        </p>
        <div className="relative flex h-full flex-col pt-[86px]">
          <div className="grid grid-cols-[repeat(6,137px)] gap-y-[41px] pl-[87px] text-[17px]">
            {padApps.map((app) => (
              <button
                key={app.label}
                className={
                  app.label === "AppDeals"
                    ? "col-start-1 flex flex-col items-center whitespace-nowrap"
                    : "flex flex-col items-center whitespace-nowrap"
                }
              >
                <span className={"h-[83px] w-[83px] rounded-3xl " + app.tile}>{app.icon}</span>
                <span className="mt-[10px] pl-[2px] leading-8 [text-shadow:0_1px_2px_rgba(0,0,0,0.7)]">{app.label}</span>
              </button>
            ))}
          </div>
          <div className="mt-[46px] flex h-4 items-center justify-center gap-[18px]">
            <span className={dash + " opacity-40"} />
            <span className={dash} />
            <span className={dash + " opacity-40"} />
            <Plus className="h-[12px] w-[12px] stroke-3 opacity-40" />
          </div>
          <nav aria-label="ScreenPad controls" className="mt-auto mb-3 grid h-[30px] grid-cols-3 items-center">
            <div className="flex items-center gap-[60px] pl-8">
              <button aria-label="Link">
                <svg viewBox="0 0 30 20" className="h-5 w-[30px]" {...line} strokeWidth="2">
                  <path d="M12 16H7.500A6 6 0 0 1 7.500 4H14l-3-2.500M18 4h4.500a6 6 0 0 1 0 12H16l3.500 2.500M10 10h10" />
                </svg>
              </button>
              <button aria-label="Touchpad">
                <svg viewBox="0 0 30 22" className="h-[22px] w-[30px]" {...line} strokeWidth="1.800">
                  <rect x="1" y="1.500" width="28" height="19" rx=".5" />
                  <path d="M15 15v5" />
                </svg>
              </button>
            </div>
            <div className="flex items-center justify-center gap-[87px]">
              <button aria-label="Back" className="opacity-25">
                <svg viewBox="0 0 24 22" className="h-[22px] w-6" {...line} strokeWidth="1.500">
                  <path d="M12 2 2 20h20z" />
                </svg>
              </button>
              <button aria-label="Home" className="h-[22px] w-[22px] rounded-full bg-white" />
              <button aria-label="Windows">
                <svg viewBox="0 0 28 20" className="h-5 w-7" {...line} strokeWidth="1.800">
                  <rect x="1" y="1.500" width="21" height="17" rx="1" />
                  <path d="M27 1.500v17" />
                </svg>
              </button>
            </div>
            <div className="flex justify-end pr-[127px]">
              <button aria-label="Settings">
                <svg viewBox="0 0 26 24" className="h-6 w-[26px]" {...line} strokeWidth="1.900">
                  <path d="M1 3.500h10M11 1v5M16 3.500h9M1 12.500h17M18 10v5M22.500 12.500H25M1 21h3M7 18.500v5M11 21h14" />
                </svg>
              </button>
            </div>
          </nav>
        </div>
      </div>
    </section>
  );
}

export default function App() {
  return (
    <div className="flex h-screen flex-col bg-black font-['Open_Sans','Noto_Sans',sans-serif]">
      <div className="flex min-h-0 flex-1 flex-col overflow-hidden bg-[#f7f7f7]">
        <TabStrip />
        <Toolbar />
        <div className="flex min-h-0 flex-1">
          <div className="flex min-w-0 flex-1 flex-col">
            <FavoritesBar />
            <BankPage />
          </div>
          <EdgeSidebar />
        </div>
        <Taskbar />
      </div>
      <ScreenPad />
    </div>
  );
}
